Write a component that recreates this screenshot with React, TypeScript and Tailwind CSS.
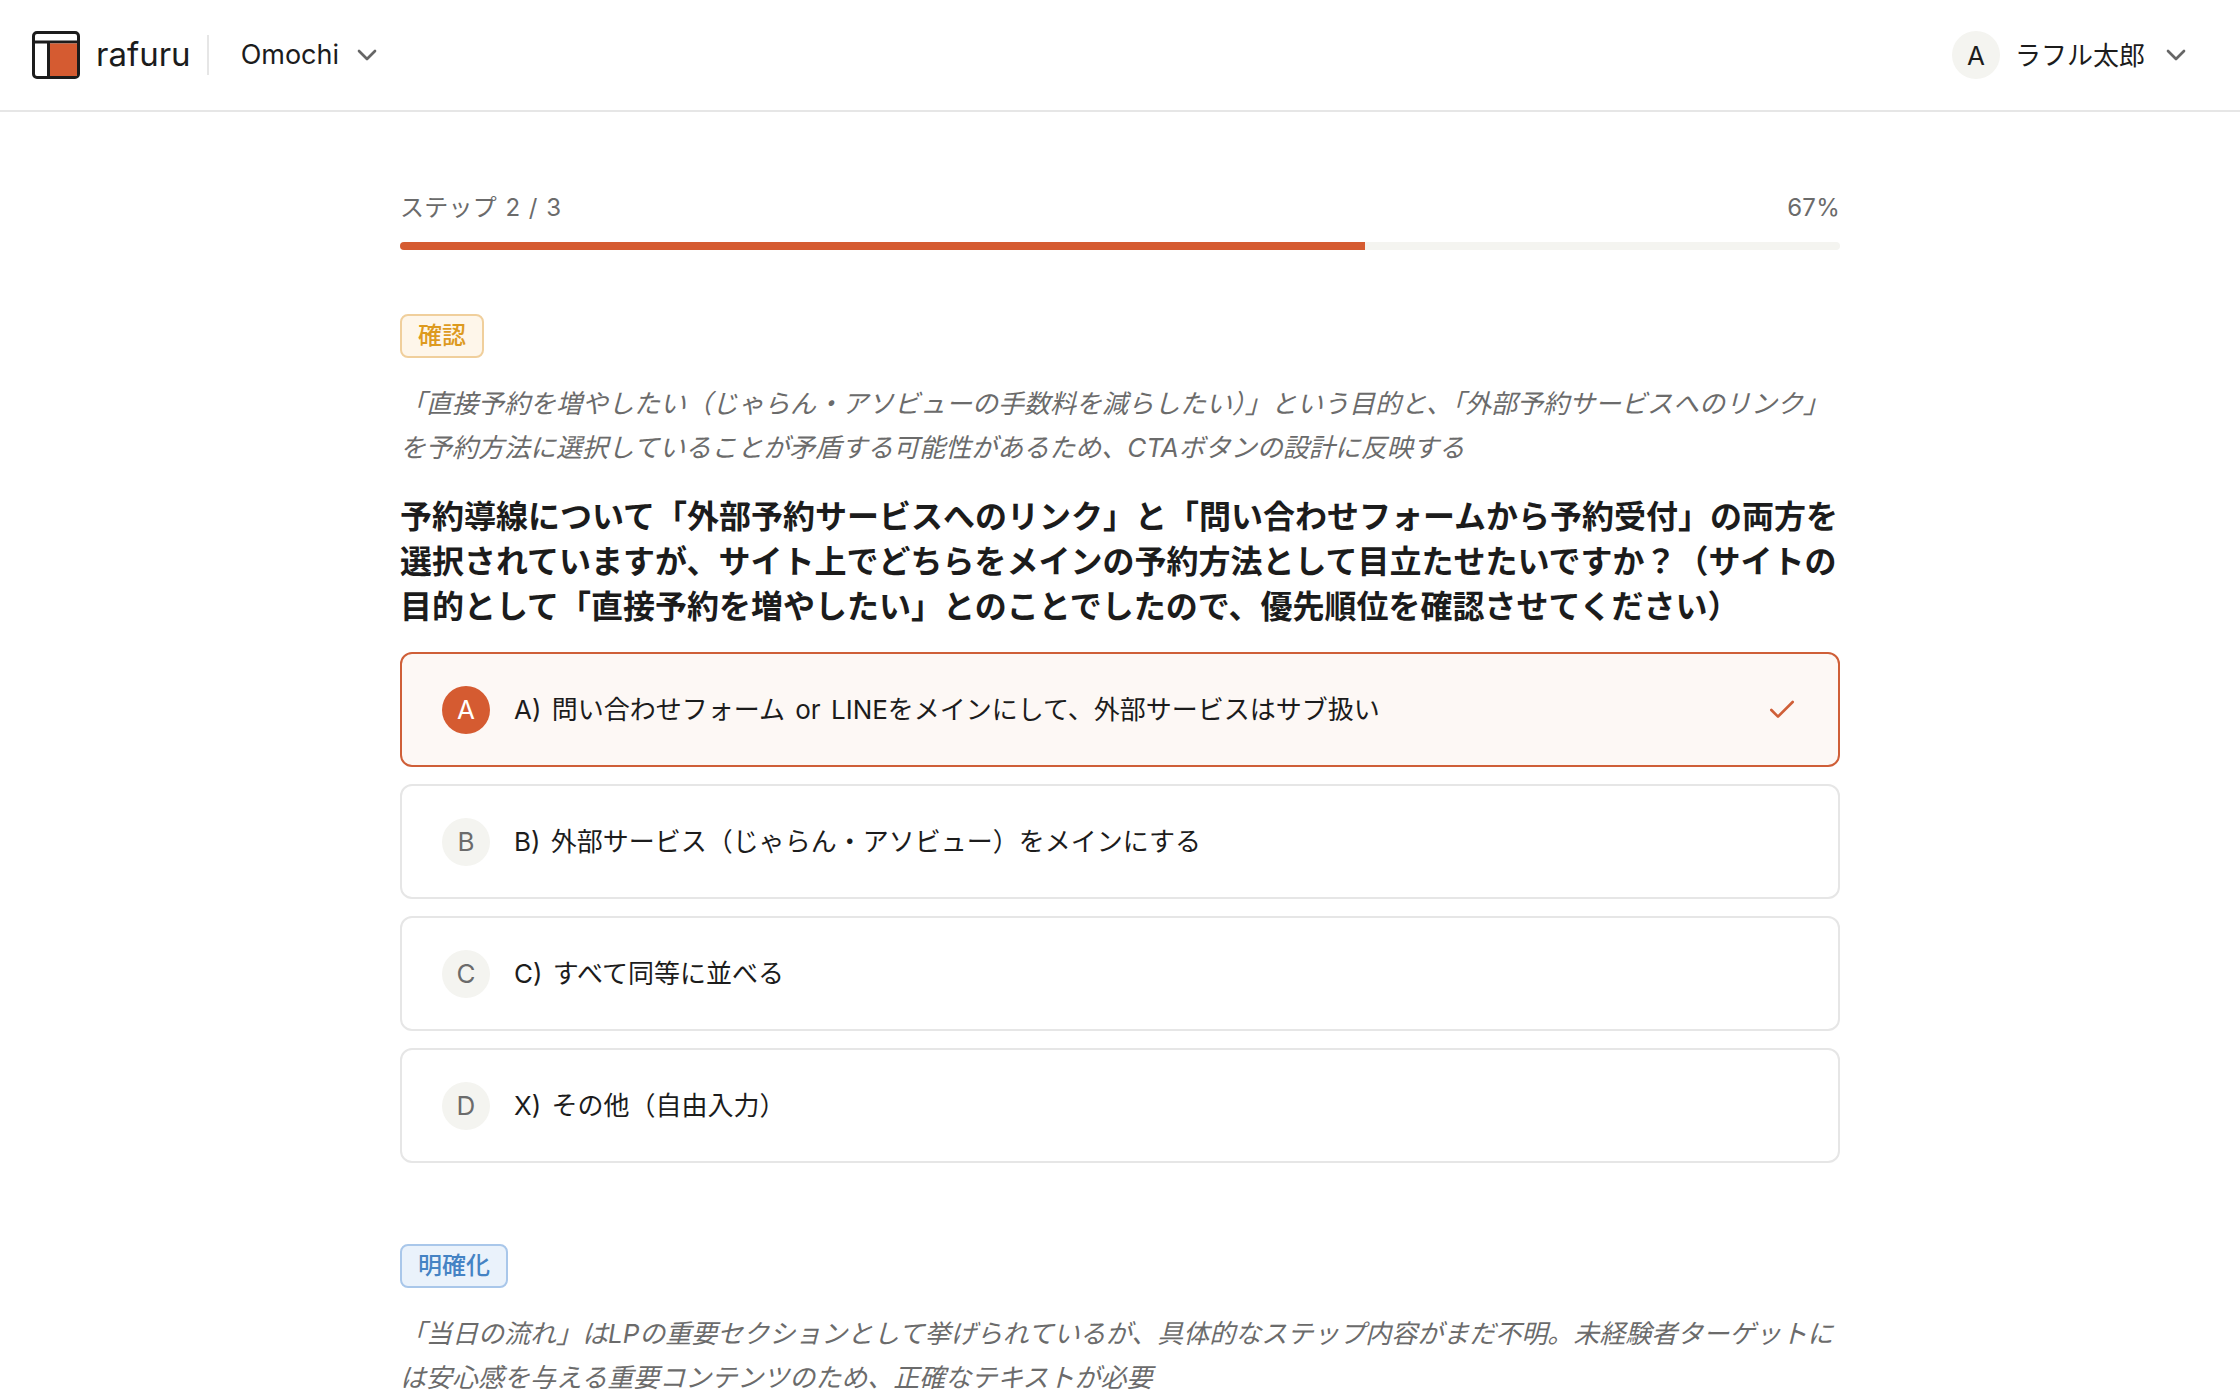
import { Check, ChevronDown } from "lucide-react"

const options = [
  { key: "A", label: "A) 問い合わせフォーム or LINEをメインにして、外部サービスはサブ扱い", selected: true },
  { key: "B", label: "B) 外部サービス（じゃらん・アソビュー）をメインにする" },
  { key: "C", label: "C) すべて同等に並べる" },
  { key: "D", label: "X) その他（自由入力）" },
]

function Logo() {
  return (
    <svg width="48" height="48" viewBox="0 0 48 48" fill="none">
      <rect x="1.5" y="1.5" width="45" height="45" rx="3.5" fill="#fff" stroke="#1c1c1c" strokeWidth="3" />
      <path d="M2 11h44" stroke="#1c1c1c" strokeWidth="3" />
      <path d="M16.5 11v34" stroke="#1c1c1c" strokeWidth="3" />
      <rect x="18" y="12.5" width="27" height="32.5" fill="#d55b31" />
    </svg>
  )
}

function Header() {
  return (
    <header className="flex h-[112px] items-center justify-between border-b-2 border-[#e6e6e6] pl-8 pr-12">
      <div className="flex items-center">
        <Logo />
        <span className="ml-4 text-[33px] text-[#1c1c1c]">rafuru</span>
        <div className="ml-4 h-10 w-0.5 bg-[#e6e6e6]" />
        <span className="ml-8 text-[27px] text-[#1c1c1c]">Omochi</span>
        <ChevronDown size={32} className="ml-[12px] text-[#666]" />
      </div>
      <div className="flex items-center">
        <div className="flex h-12 w-12 items-center justify-center rounded-full bg-[#f4f4f0] text-[26px] text-[#1c1c1c]">A</div>
        <span className="ml-[15px] text-[26px] text-[#1c1c1c]">ラフル太郎</span>
        <ChevronDown size={32} className="ml-[15px] text-[#666]" />
      </div>
    </header>
  )
}

function OptionCard({ option }: { option: (typeof options)[number] }) {
  return (
    <div
      className={`flex h-[115px] items-center rounded-xl border-2 px-10 ${
        option.selected ? "border-[#cf5f38] bg-[#fdf8f5]" : "border-[#e6e6e6] bg-white"
      }`}
    >
      <div
        className={`flex h-12 w-12 shrink-0 items-center justify-center rounded-full text-[26px] ${
          option.selected ? "bg-[#d55b31] text-white" : "bg-[#f4f4f0] text-[#6b6b6b]"
        }`}
      >
        {option.key}
      </div>
      <span className="ml-6 flex-1 text-[26px] [word-spacing:3px] text-[#1c1c1c]">{option.label}</span>
      {option.selected && <Check size={32} className="text-[#cf5f38]" />}
    </div>
  )
}

export default function App() {
  return (
    <div className="h-[1400px] overflow-hidden bg-white font-['Inter','Noto_Sans_CJK_JP',sans-serif]">
      <Header />
      <main className="mx-auto w-[1440px] pt-[78px]">
        <div className="mb-4 flex justify-between text-[24px] leading-9 tracking-[0.01em] [word-spacing:1.5px] text-[#6b6b6b]">
          <span>ステップ 2 / 3</span>
          <span>67%</span>
        </div>
        <div className="h-2 rounded-full bg-[#f4f4f0]">
          <div className="h-2 w-[67%] rounded-l-full bg-[#d55b31]" />
        </div>

        <section className="mt-16">
          <span className="inline-block h-11 rounded-lg border-2 border-[#f0cf9c] bg-[#fef6ea] px-4 text-[24px] leading-10 font-medium text-[#dd9a1f]">確認</span>
          <p className="mt-6 text-[26px] leading-[44px] text-[#6b6b6b] italic">
            「直接予約を増やしたい（じゃらん・アソビューの手数料を減らしたい）」という目的と、「外部予約サービスへのリンク」を予約方法に選択していることが矛盾する可能性があるため、CTAボタンの設計に反映する
          </p>
          <h2 className="mt-6 text-[32px] leading-[45px] font-bold text-[#1c1c1c]">
            予約導線について「外部予約サービスへのリンク」と「問い合わせフォームから予約受付」の両方を選択されていますが、サイト上でどちらをメインの予約方法として目立たせたいですか？（サイトの目的として「直接予約を増やしたい」とのことでしたので、優先順位を確認させてください）
          </h2>
          <div className="mt-[23px] flex flex-col gap-[17px]">
            {options.map((option) => (
              <OptionCard key={option.key} option={option} />
            ))}
          </div>
        </section>

        <section className="mt-[81px]">
          <span className="inline-block h-11 rounded-lg border-2 border-[#a9c7ea] bg-[#eaf2fb] px-4 text-[24px] leading-10 font-medium text-[#4583c4]">明確化</span>
          <p className="mt-6 text-[26px] leading-[44px] text-[#6b6b6b] italic">
            「当日の流れ」はLPの重要セクションとして挙げられているが、具体的なステップ内容がまだ不明。未経験者ターゲットには安心感を与える重要コンテンツのため、正確なテキストが必要
          </p>
        </section>
      </main>
    </div>
  )
}
